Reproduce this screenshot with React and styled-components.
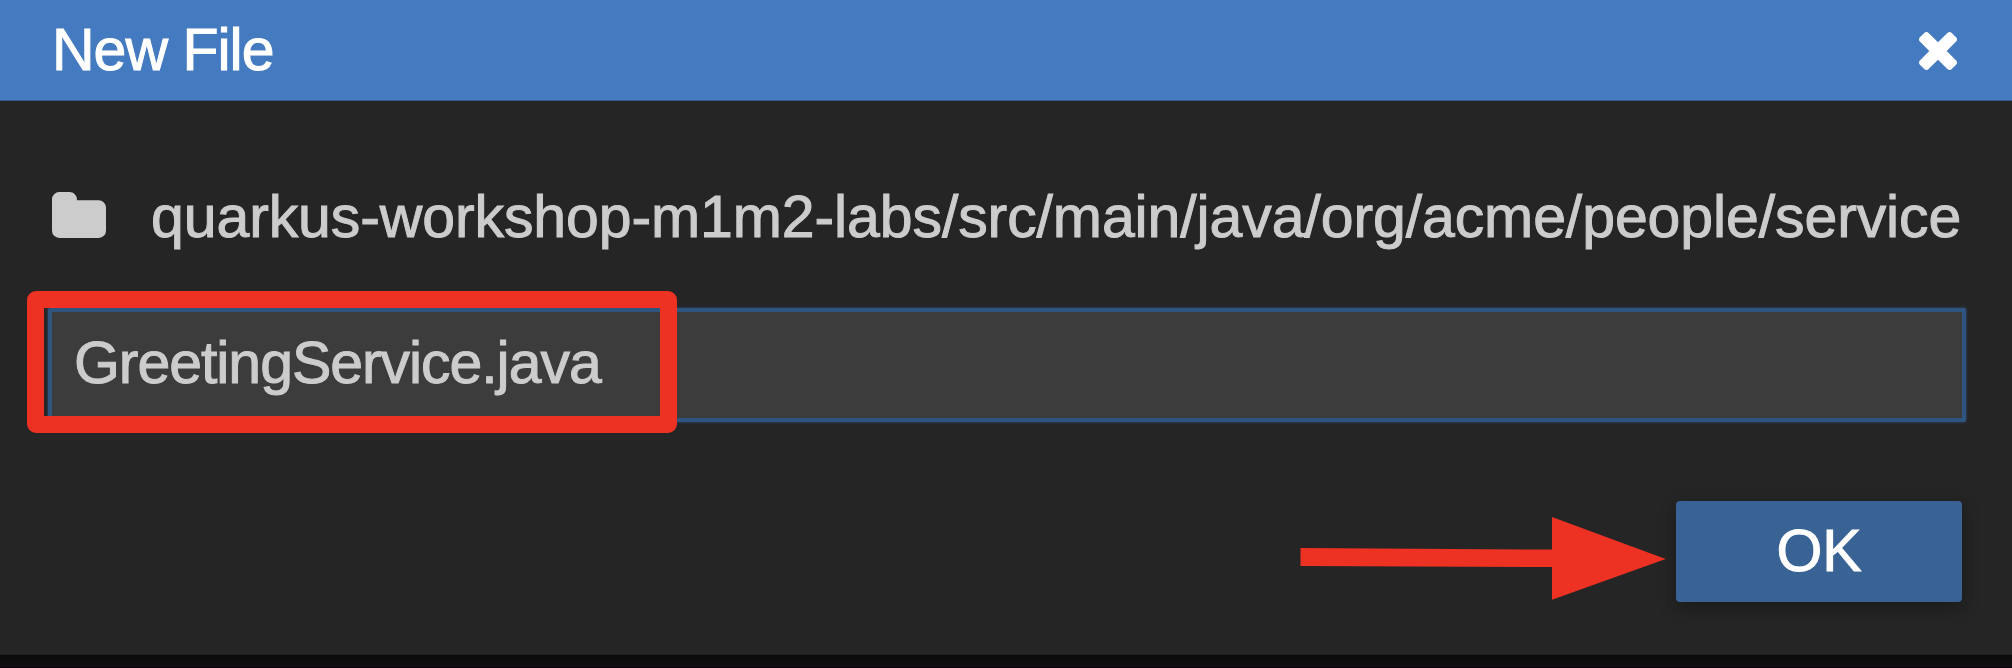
import React from "react";
import styled, { createGlobalStyle } from "styled-components";

const GlobalStyle = createGlobalStyle`
  html, body { margin: 0; padding: 0; background: #0d0d0d; overflow: hidden; }
  *, *::before, *::after { box-sizing: border-box; }
`;

const Page = styled.div`
  position: relative;
  width: 2012px;
  height: 668px;
  background: linear-gradient(#0b0b0b, #101010) 0 655px / 100% 12px no-repeat, #0c000c;
  font-family: "Liberation Sans", Arial, Helvetica, sans-serif;
  font-size: 59px;
`;

const Dialog = styled.section`
  height: 655px;
  display: flex;
  flex-direction: column;
  background: #252525;
  border-bottom: 1px solid #1f1f1f;
`;

const Header = styled.header`
  height: 101px;
  flex: none;
  display: flex;
  align-items: center;
  justify-content: space-between;
  padding: 0 55px 0 52px;
  background: #447abf;
  border-bottom: 1px solid #355a87;
  color: #fff;
`;

const Title = styled.h1`
  margin: 0;
  font-size: 59px;
  font-weight: 400;
  line-height: 64px;
  letter-spacing: -1px;
  -webkit-text-stroke: 1px currentColor;
`;

const CloseButton = styled.button`
  display: flex;
  margin: 2px 0 0;
  padding: 0;
  border: 0;
  background: none;
  color: inherit;
`;

const Icon = styled.svg`
  display: block;
  flex: none;
  fill: currentColor;
`;

const Content = styled.div`
  flex: 1;
  display: flex;
  flex-direction: column;
  padding: 84px 46px 0 48px;
`;

const PathRow = styled.div`
  height: 64px;
  display: flex;
  align-items: flex-start;
  gap: 45px;
  padding-left: 4px;
  color: #ccc;

  ${Icon} {
    margin-top: 7px;
  }
`;

const PathText = styled.span`
  line-height: 64px;
  white-space: nowrap;
  letter-spacing: -0.1px;
  -webkit-text-stroke: 1px currentColor;
`;

const NameInput = styled.input`
  width: 1918px;
  height: 114px;
  margin-top: 59px;
  padding: 0 0 4px 22px;
  border: 4px solid #2e5480;
  border-radius: 2px;
  box-shadow: 0 0 3px #2e5480;
  outline: 0;
  background: #3c3c3c;
  color: #ccc;
  font: inherit;
  letter-spacing: -1.05px;
  -webkit-text-stroke: 1px currentColor;
`;

const Footer = styled.footer`
  display: flex;
  justify-content: flex-end;
  margin-top: 79px;
  padding-right: 4px;
`;

const OkButton = styled.button`
  width: 286px;
  height: 101px;
  padding: 0 0 1px;
  border: 0;
  border-radius: 4px;
  background: #396295;
  box-shadow: 0 6px 18px rgba(0, 0, 0, 0.3);
  color: #fff;
  font: inherit;
  -webkit-text-stroke: 1px currentColor;
`;

const Highlight = styled.div`
  position: absolute;
  left: 27px;
  top: 291px;
  width: 650px;
  height: 142px;
  border: 17.5px solid #ed3224;
  border-radius: 9px;
  pointer-events: none;
`;

const Arrow = styled.svg`
  position: absolute;
  left: 1300px;
  top: 516px;
  fill: #ed3224;
  pointer-events: none;
`;

const CloseIcon = () => (
  <Icon width="38" height="38" viewBox="302 366 1188 1188">
    <path d="M1490 1322q0 40-28 68l-136 136q-28 28-68 28t-68-28l-294-294-294 294q-28 28-68 28t-68-28l-136-136q-28-28-28-68t28-68l294-294-294-294q-28-28-28-68t28-68l136-136q28-28 68-28t68 28l294 294 294-294q28-28 68-28t68 28l136 136q28 28 28 68t-28 68l-294 294 294 294q28 28 28 68z" />
  </Icon>
);

const FolderIcon = () => (
  <Icon width="54" height="46" viewBox="64 128 1664 1408" preserveAspectRatio="none">
    <path d="M1728 608v704q0 92-66 158t-158 66h-1216q-92 0-158-66t-66-158v-960q0-92 66-158t158-66h320q92 0 158 66t66 158v32h672q92 0 158 66t66 158z" />
  </Icon>
);

export default function App() {
  return (
    <Page>
      <GlobalStyle />
      <Dialog>
        <Header>
          <Title>New File</Title>
          <CloseButton aria-label="Close"><CloseIcon /></CloseButton>
        </Header>
        <Content>
          <PathRow>
            <FolderIcon />
            <PathText>quarkus-workshop-m1m2-labs/src/main/java/org/acme/people/service</PathText>
          </PathRow>
          <NameInput defaultValue="GreetingService.java" spellCheck={false} />
          <Footer>
            <OkButton>OK</OkButton>
          </Footer>
        </Content>
      </Dialog>
      <Highlight />
      <Arrow width="366" height="84" viewBox="0 0 366 84">
        <path d="M0.5 32L252 33.6V1L365.7 43L252 83.7V51L0.5 50Z" />
      </Arrow>
    </Page>
  );
}
